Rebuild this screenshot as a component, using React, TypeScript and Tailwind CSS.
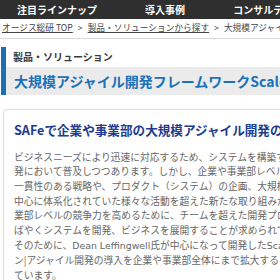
const navItems = ["注目ラインナップ", "導入事例", "コンサルティング"];

const lines = [
  "ビジネスニーズにより迅速に対応するため、システムを構築する開発手法として",
  "発において普及しつつあります。しかし、企業や事業部レベルで一貫性のある",
  "一貫性のある戦略や、プロダクト（システム）の企画、大規模な開発を行うには",
  "中心に体系化されていた様々な活動を超えた新たな取り組みが必要です。企",
  "業部レベルの競争力を高めるために、チームを超えた開発プロセスで、す",
  "ばやくシステムを開発、ビジネスを展開することが求められています。",
];

export default function App() {
  return (
    <div className="h-[280px] w-[280px] overflow-hidden bg-white font-['Noto_Sans_CJK_JP','Noto_Sans',sans-serif]">
      <div className="w-[640px]">
        {/* global nav */}
        <nav className="flex h-[19px] items-center bg-[#2f2f2f] pl-[3px]">
          {navItems.map((item) => (
            <div
              key={item}
              className="flex w-[108px] justify-center text-[10px] font-bold leading-none text-white"
            >
              {item}
            </div>
          ))}
        </nav>

        {/* breadcrumb */}
        <div className="flex h-[20px] items-center gap-[5px] border-b border-[#d9d9d9] pl-[2px] text-[8.7px] leading-none text-[#444]">
          <a className="underline">オージス総研 TOP</a>
          <span>&gt;</span>
          <a className="underline">製品・ソリューションから探す</a>
          <span>&gt;</span>
          <span>大規模アジャイル開発フレームワークScaled Agile Framework（SAFe）</span>
        </div>

        {/* page title */}
        <div className="ml-[1px] mt-[8px] border-l-[5px] border-[#1b6fb3]">
          <div className="flex h-[20px] items-center pl-[7px] text-[10px] font-bold leading-none text-[#3a3a3a]">
            製品・ソリューション
          </div>
          <div className="flex h-[28px] items-center bg-[#ebebeb] pl-[8px] text-[14px] font-bold leading-none text-[#1a72b9]">
            大規模アジャイル開発フレームワークScaled Agile Framework（SAFe）
          </div>
        </div>

        {/* intro card */}
        <section className="ml-[3px] mt-[14px] rounded-[4px] border border-[#dcdcdc] px-[10px] pt-[14px]">
          <h2 className="whitespace-nowrap text-[12.6px] font-bold leading-none text-[#213b8c]">
            SAFeで企業や事業部の大規模アジャイル開発の実現を
          </h2>
          <p className="mt-[13px] text-[9.75px] leading-[14.65px] text-[#666]">
            {lines.map((line) => (
              <span key={line} className="block whitespace-nowrap">
                {line}
              </span>
            ))}
            <span className="block whitespace-nowrap">
              そのために、
              <span className="font-['DejaVu_Sans',sans-serif] text-[9.4px]">Dean Leffingwell</span>
              氏が中心になって開発した
              <span className="font-['DejaVu_Sans',sans-serif] text-[9.4px]">Scaled Agile Framework</span>
            </span>
            <span className="block whitespace-nowrap">
              ン|アジャイル開発の導入を企業や事業部全体にまで拡大することが求められ
            </span>
            <span className="block whitespace-nowrap">ています。</span>
          </p>
        </section>
      </div>
    </div>
  );
}
